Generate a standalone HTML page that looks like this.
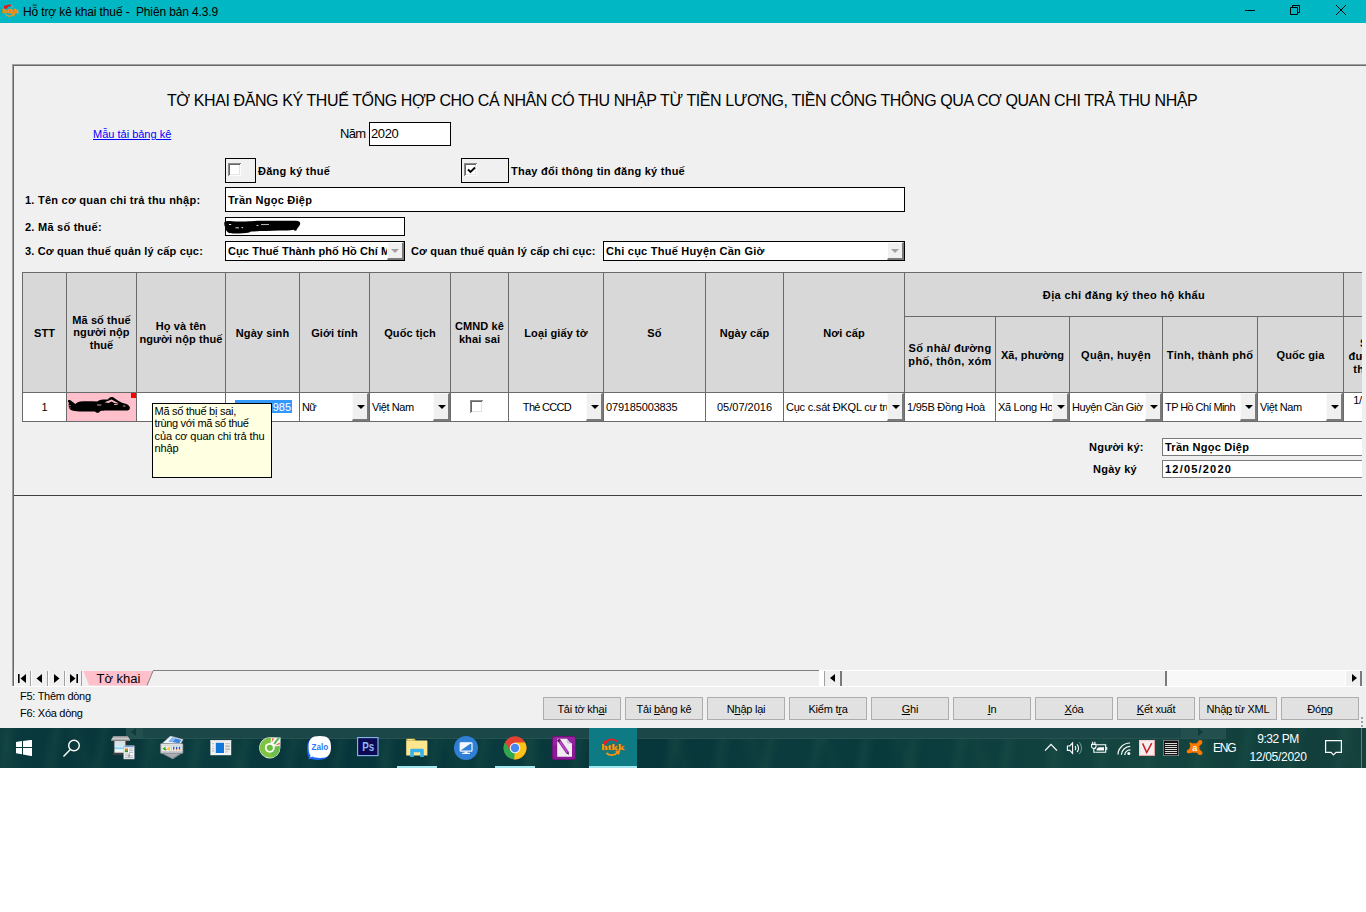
<!DOCTYPE html>
<html lang="vi">
<head>
<meta charset="utf-8">
<title>Hỗ trợ kê khai thuế</title>
<style>
*{box-sizing:border-box;margin:0;padding:0}
html,body{width:1366px;height:912px;overflow:hidden;background:#fff}
body{position:relative;font-family:"Liberation Sans",sans-serif;font-size:11px;color:#000}
.abs{position:absolute}
#win{position:absolute;left:0;top:0;width:1366px;height:728px;background:#f0f0f0;overflow:hidden}
#titlebar{position:absolute;left:0;top:0;width:1366px;height:23px;background:#00b7c3}
#title{position:absolute;left:23px;top:5px;font-size:12px;line-height:14px;white-space:pre;letter-spacing:-0.13px}
.b{font-weight:bold;letter-spacing:0.25px}
.lbl{position:absolute;white-space:nowrap;line-height:13px}
.inp{position:absolute;background:#fff;border:1px solid #000;white-space:nowrap;overflow:hidden;line-height:13px}
/* table */
#grid{position:absolute;left:22px;top:272px;width:1340px;height:150px;overflow:hidden}
.hc{position:absolute;padding-top:2px;background:#d8d8d8;border:1px solid #6a6a6a;display:flex;align-items:center;justify-content:center;text-align:center;font-weight:bold;letter-spacing:0.1px;line-height:12.5px;white-space:nowrap}
.dc{position:absolute;background:#fff;border:1px solid #6a6a6a;top:120px;height:30px;line-height:29px;white-space:nowrap;overflow:hidden;padding-left:2px}
.dc.c{text-align:center;padding-left:0}
.dd{position:absolute;top:0;right:0;width:17px;height:28px;background:#f0f0f0;border-left:1px solid #fafafa;border-top:1px solid #fafafa;border-right:2px solid #7a7a7a;border-bottom:2px solid #7a7a7a}
.dd:after{content:"";position:absolute;left:4px;top:11px;border-left:4px solid transparent;border-right:4px solid transparent;border-top:4px solid #000}
.cb{position:absolute;width:13px;height:13px;background:#fff;box-shadow:inset 1px 1px 0 #8a8a8a,inset -1px -1px 0 #fdfdfd,inset 2px 2px 0 #666,inset -2px -2px 0 #e3e3e3}
/* buttons */
.btn{position:absolute;top:697px;width:78px;height:23px;background:#e1e1e1;border:1px solid #adadad;text-align:center;font-size:11px;line-height:22px;white-space:nowrap;letter-spacing:-0.24px}
.btn u{text-decoration:underline}
/* taskbar */
#taskbar{position:absolute;left:0;top:728px;width:1366px;height:40px;overflow:hidden;background:
repeating-linear-gradient(100deg,rgba(40,95,80,0) 0,rgba(40,95,80,0.22) 9px,rgba(40,95,80,0) 19px,rgba(40,95,80,0) 47px),
repeating-linear-gradient(72deg,rgba(30,80,70,0) 0,rgba(30,80,70,0.2) 13px,rgba(30,80,70,0) 24px,rgba(30,80,70,0) 71px),
linear-gradient(90deg,#0a3a3d 0%,#07353a 8%,#0b3d3f 14%,#06343a 24%,#093a3d 36%,#07363a 48%,#0b3b3d 56%,#083a3c 64%,#0f403f 74%,#15453f 84%,#11403d 92%,#143f3c 100%)}
.tray{color:#fff;position:absolute;white-space:nowrap}
</style>
</head>
<body>
<div id="win">
  <div id="titlebar">
    <svg class="abs" style="left:0;top:0" width="20" height="23" viewBox="0 0 20 23">
      <path d="M11 5.6 C8.6 5 6.4 6 5.6 8" fill="none" stroke="#f01010" stroke-width="1.6"/>
      <path d="M4 5.4 L7.8 6.2 L7 8.6 L4.2 8.7 Z" fill="#f01010"/>
      <path d="M11.2 5.4 C12 6 12.4 6.8 12.6 7.6" fill="none" stroke="#9fd0d6" stroke-width="0.7"/>
      <path d="M6.4 15 C8.6 16.6 11 16.4 12.6 14.8" fill="none" stroke="#f79410" stroke-width="1.5"/>
      <path d="M11 13.2 L14.8 13 L14.6 16.8 Z" fill="#f79410"/>
      <path d="M5.2 14 C5.6 14.6 6 15 6.6 15.4" fill="none" stroke="#9fd0d6" stroke-width="0.7"/>
      <text x="2" y="12.7" font-family="Liberation Serif, serif" font-weight="bold" font-size="6.5" fill="#f99a14" stroke="#f58a0a" stroke-width="0.6" textLength="16" lengthAdjust="spacingAndGlyphs">htkk</text>
    </svg>
    <div id="title">Hỗ trợ kê khai thuế -  Phiên bản 4.3.9</div>
    <svg class="abs" style="left:1240px;top:0" width="126" height="23" viewBox="0 0 126 23" fill="none" stroke="#000" stroke-width="1">
      <path d="M5 10.5 H15"/>
      <path d="M50.5 7.5 h7 v7 h-7 z"/>
      <path d="M52.5 7.5 v-2 h7 v7 h-2"/>
      <path d="M96 5 L106 15 M106 5 L96 15"/>
    </svg>
  </div>

  <!-- main panel borders -->
  <div class="abs" style="left:12px;top:64px;width:1354px;height:1px;background:#a0a0a0"></div>
  <div class="abs" style="left:13px;top:65px;width:1353px;height:1px;background:#696969"></div>
  <div class="abs" style="left:12px;top:64px;width:1px;height:622px;background:#a0a0a0"></div>
  <div class="abs" style="left:13px;top:65px;width:1px;height:621px;background:#696969"></div>
  <div class="abs" style="left:14px;top:495px;width:1348px;height:1px;background:#404040"></div>
  <div class="abs" style="left:12px;top:686px;width:1354px;height:1px;background:#fff"></div>

  <!-- heading -->
  <div class="lbl" id="heading" style="left:167px;top:92px;font-size:16px;line-height:18px;letter-spacing:-0.4px">TỜ KHAI ĐĂNG KÝ THUẾ TỔNG HỢP CHO CÁ NHÂN CÓ THU NHẬP TỪ TIỀN LƯƠNG, TIỀN CÔNG THÔNG QUA CƠ QUAN CHI TRẢ THU NHẬP</div>

  <div class="lbl" id="link" style="left:93px;top:128px;color:#0000ff;text-decoration:underline">Mẫu tải bảng kê</div>
  <div class="lbl" id="nam" style="left:340px;top:126px;font-size:13px;line-height:15px;letter-spacing:-0.7px">Năm</div>
  <div class="inp" style="left:369px;top:122px;width:82px;height:24px;font-size:13px;line-height:21px;padding-left:1px;letter-spacing:-0.36px">2020</div>

  <!-- checkboxes -->
  <div class="abs" style="left:225px;top:158px;width:31px;height:25px;border:1px solid #000"></div>
  <div class="cb" style="left:228px;top:163px"></div>
  <div class="lbl b" id="l_dk" style="left:258px;top:165px">Đăng ký thuế</div>
  <div class="abs" style="left:461px;top:158px;width:48px;height:25px;border:1px solid #000"></div>
  <div class="cb" style="left:464px;top:163px"><svg class="abs" style="left:3px;top:2.5px" width="9" height="9" viewBox="0 0 9 9"><path d="M1 3.5 L3.5 6 L8 1.5" fill="none" stroke="#000" stroke-width="1.8"/></svg></div>
  <div class="lbl b" id="l_td" style="left:511px;top:165px">Thay đổi thông tin đăng ký thuế</div>

  <div class="lbl b" id="l1" style="left:25px;top:194px">1. Tên cơ quan chi trả thu nhập:</div>
  <div class="inp b" style="left:225px;top:187px;width:680px;height:25px;line-height:25px;padding-left:2px">Trần Ngọc Điệp</div>
  <div class="lbl b" id="l2" style="left:25px;top:221px">2. Mã số thuế:</div>
  <div class="inp" style="left:225px;top:217px;width:180px;height:19px"></div>
  <svg class="abs" style="left:224px;top:219px" width="78" height="16" viewBox="0 0 78 16"><path d="M0.4 3.2 C1.5 2 4 2 8 2.2 C14 2.6 20 2.4 28 2.2 C32 1.8 40 1.8 50 1.8 L72 1.8 C75.5 1.8 76.8 3.4 76 5.6 C75 8 73 9.4 72.4 11.6 L70.6 11.8 L69.8 10.8 C66 11.6 60 11.4 55 11.6 C45 12 36 12 27 12.6 C25.5 14 23 14.2 19 14.2 C13 14.4 8 14.6 5 14 C2.6 13 1.8 11 1.4 8.6 C0.6 7 0 5 0.4 3.2 Z" fill="#000"/><g fill="#fff"><rect x="5" y="5" width="2.2" height="0.9"/><rect x="11.5" y="8.4" width="3.4" height="0.9"/><rect x="17.5" y="8.2" width="1.6" height="0.9"/><rect x="32.5" y="6" width="2" height="0.8"/><rect x="37" y="5.2" width="8" height="0.7"/></g></svg>
  <div class="lbl b" id="l3" style="left:25px;top:245px;letter-spacing:0.16px">3. Cơ quan thuế quản lý cấp cục:</div>
  <div class="inp b" style="left:225px;top:241px;width:180px;height:20px;line-height:18px;padding-left:2px;letter-spacing:0.08px">Cục Thuế Thành phố Hồ Chí Minh
    <div class="abs" style="right:0;top:0;width:17px;height:18px;background:#f0f0f0;border-left:1px solid #fff;border-top:1px solid #fff;border-right:2px solid #7a7a7a;border-bottom:2px solid #7a7a7a"><div class="abs" style="left:3px;top:6px;border-left:4px solid transparent;border-right:4px solid transparent;border-top:4px solid #a0a0a0"></div></div>
  </div>
  <div class="lbl b" id="l4" style="left:411px;top:245px;letter-spacing:0.15px">Cơ quan thuế quản lý cấp chi cục:</div>
  <div class="inp b" style="left:603px;top:241px;width:302px;height:20px;line-height:18px;padding-left:2px">Chi cục Thuế Huyện Cần Giờ
    <div class="abs" style="right:0;top:0;width:17px;height:18px;background:#f0f0f0;border-left:1px solid #fff;border-top:1px solid #fff;border-right:2px solid #7a7a7a;border-bottom:2px solid #7a7a7a"><div class="abs" style="left:3px;top:6px;border-left:4px solid transparent;border-right:4px solid transparent;border-top:4px solid #a0a0a0"></div></div>
  </div>

  <!-- grid -->
  <div id="grid">
    <div class="hc" style="left:0;top:0;width:45px;height:121px">STT</div>
    <div class="hc" style="left:44px;top:0;width:71px;height:121px;padding-top:0;padding-bottom:0">Mã số thuế<br>người nộp<br>thuế</div>
    <div class="hc" style="left:114px;top:0;width:90px;height:121px;padding-top:0">Họ và tên<br>người nộp thuế</div>
    <div class="hc" style="left:203px;top:0;width:75px;height:121px">Ngày sinh</div>
    <div class="hc" style="left:277px;top:0;width:71px;height:121px">Giới tính</div>
    <div class="hc" style="left:347px;top:0;width:82px;height:121px">Quốc tịch</div>
    <div class="hc" style="left:428px;top:0;width:59px;height:121px;padding-top:0">CMND kê<br>khai sai</div>
    <div class="hc" style="left:486px;top:0;width:96px;height:121px">Loại giấy tờ</div>
    <div class="hc" style="left:581px;top:0;width:103px;height:121px">Số</div>
    <div class="hc" style="left:683px;top:0;width:79px;height:121px">Ngày cấp</div>
    <div class="hc" style="left:761px;top:0;width:122px;height:121px">Nơi cấp</div>
    <div class="hc" style="left:882px;top:0;width:440px;height:45px;letter-spacing:0.36px">Địa chỉ đăng ký theo hộ khẩu</div>
    <div class="hc" style="left:882px;top:44px;width:92px;height:77px;padding-top:0;letter-spacing:0.32px">Số nhà/ đường<br>phố, thôn, xóm</div>
    <div class="hc" style="left:973px;top:44px;width:75px;height:77px">Xã, phường</div>
    <div class="hc" style="left:1047px;top:44px;width:94px;height:77px;letter-spacing:0.3px">Quận, huyện</div>
    <div class="hc" style="left:1140px;top:44px;width:96px;height:77px;letter-spacing:0.26px">Tỉnh, thành phố</div>
    <div class="hc" style="left:1235px;top:44px;width:87px;height:77px">Quốc gia</div>
    <div class="hc" style="left:1321px;top:0;width:440px;height:45px"></div>
    <div class="hc" style="left:1321px;top:44px;width:76px;height:77px;line-height:13px;padding-top:3px;letter-spacing:0.3px">Số nhà/<br>đường phố,<br>thôn, xóm</div>

    <div class="dc c" style="left:0;width:45px">1</div>
    <div class="dc" style="left:44px;width:71px;background:#ffc0cb">
      <svg class="abs" style="left:0;top:0" width="66" height="24" viewBox="0 0 66 24"><path fill-rule="evenodd" d="M1 7.6 C2 6.8 3.4 7 4.4 8 L8.4 11 C10 9.6 11.6 9 13.4 8.6 C18 8.2 24 8.4 30 8.4 C32 7.4 34 6.6 36 6.5 L41 6.4 C42 5 43 4.2 44.4 4.1 C45.8 4 46.8 4.4 47.6 5.2 C50 7 52.4 8.6 55 9.8 C57 10.4 58.6 10.6 60 11.2 C61.6 12.2 62.6 13.4 62.9 14.6 C63 15.8 62.6 16.6 61.8 17 C60.4 17.8 59 17.4 58 17.6 L40 17.6 C37 17.6 35 17.8 33 18.2 C32.4 19.4 31.4 19.8 30.4 19.7 C29.2 19.6 28.6 19 28 18.4 L14 18.4 C10 18.6 6 18 3.4 16.8 C2 15.6 1.6 14 1.8 12.6 C1.4 11.6 1.6 10.6 2.2 10 C1.2 9.4 0.6 8.4 1 7.6 Z M37.5 9.2 L44.6 6.6 L52 10.6 L48 10.2 L44.6 8.6 L41.4 9.9 Z" fill="#000"/><g fill="#ffc0cb"><rect x="30" y="11.6" width="4.4" height="0.8"/><rect x="47" y="11.2" width="3.6" height="0.8"/><rect x="56" y="12.6" width="2.4" height="0.8"/><rect x="2.6" y="12" width="0.9" height="1"/><rect x="2.6" y="14.4" width="0.9" height="1"/></g></svg>
      <div class="abs" style="right:0;top:0;width:5px;height:5px;background:#ff0000"></div>
    </div>
    <div class="dc" style="left:114px;width:90px"></div>
    <div class="dc" style="left:203px;width:75px;padding-left:0"><span class="abs" style="left:9px;top:7px;height:13px;line-height:15px;background:#3399ff;color:#fff;padding:0 1px">20/10/1985</span></div>
    <div class="dc" style="left:277px;width:71px;letter-spacing:-0.6px">Nữ<div class="dd"></div></div>
    <div class="dc" style="left:347px;width:82px;letter-spacing:-0.41px">Việt Nam<div class="dd"></div></div>
    <div class="dc" style="left:428px;width:59px"><div class="cb" style="left:19px;top:7px"></div></div>
    <div class="dc c" style="left:486px;width:96px;padding-right:18px;letter-spacing:-0.69px">Thẻ CCCD<div class="dd"></div></div>
    <div class="dc" style="left:581px;width:103px;letter-spacing:-0.16px">079185003835</div>
    <div class="dc c" style="left:683px;width:79px">05/07/2016</div>
    <div class="dc" style="left:761px;width:122px;letter-spacing:-0.22px">Cục c.sát ĐKQL cư trú<div class="dd"></div></div>
    <div class="dc" style="left:882px;width:92px;letter-spacing:-0.24px">1/95B Đồng Hoà</div>
    <div class="dc" style="left:973px;width:75px;letter-spacing:-0.3px">Xã Long Hoà<div class="dd"></div></div>
    <div class="dc" style="left:1047px;width:94px;letter-spacing:-0.43px">Huyện Cần Giờ<div class="dd"></div></div>
    <div class="dc" style="left:1140px;width:96px;letter-spacing:-0.58px">TP Hồ Chí Minh<div class="dd"></div></div>
    <div class="dc" style="left:1235px;width:87px;letter-spacing:-0.41px">Việt Nam<div class="dd"></div></div>
    <div class="dc" style="left:1321px;width:76px;line-height:13px;text-align:center;padding:1px 0 0 0;white-space:normal;letter-spacing:-0.24px">1/95B Đồng Hoà</div>
  </div>

  <!-- tooltip -->
  <div class="abs" id="tip" style="left:152px;top:403px;width:120px;height:75px;background:#ffffe1;border:1px solid #000;padding:1px 0 0 1.5px;font-size:11px;line-height:12.35px;letter-spacing:-0.1px;white-space:nowrap"><span style="letter-spacing:-0.26px">Mã số thuế bị sai,</span><br><span style="letter-spacing:-0.34px">trùng với mã số thuế</span><br>của cơ quan chi trả thu<br>nhập</div>

  <!-- signer -->
  <div class="lbl b" id="l_nk" style="left:1089px;top:441px">Người ký:</div>
  <div class="inp b" style="left:1162px;top:438px;width:210px;height:18px;line-height:16px;padding-left:2px;border-color:#7a7a7a">Trần Ngọc Diệp</div>
  <div class="lbl b" id="l_ngk" style="left:1093px;top:463px">Ngày ký</div>
  <div class="inp b" style="left:1162px;top:460px;width:210px;height:18px;line-height:16px;padding-left:2px;border-color:#7a7a7a;letter-spacing:1.2px">12/05/2020</div>
  <div class="abs" style="left:1362px;top:66px;width:4px;height:429px;background:#f0f0f0"></div>

  <!-- sheet tab bar -->
  <div class="abs" style="left:153px;top:670px;width:666px;height:1px;background:#808080"></div>
  <svg class="abs" style="left:14px;top:671px" width="142" height="15" viewBox="0 0 142 15">
    <rect x="0" y="0" width="68" height="15" fill="#f0f0f0"/>
    <g fill="#fff"><rect x="0" y="0" width="1" height="15"/><rect x="17" y="0" width="1" height="15"/><rect x="34" y="0" width="1" height="15"/><rect x="51" y="0" width="1" height="15"/></g>
    <g fill="#a0a0a0"><rect x="16" y="0" width="1" height="15"/><rect x="33" y="0" width="1" height="15"/><rect x="50" y="0" width="1" height="15"/><rect x="67" y="0" width="1" height="15"/></g>
    <g fill="#000">
      <rect x="4" y="3" width="1.6" height="9"/><path d="M12 3 V12 L6.5 7.5 Z"/>
      <path d="M28 3 V12 L22.5 7.5 Z"/>
      <path d="M40 3 V12 L45.5 7.5 Z"/>
      <path d="M56 3 V12 L61.5 7.5 Z"/><rect x="62.4" y="3" width="1.6" height="9"/>
    </g>
    <path d="M69.5 0 L139 0 L133 14.5 L75 14.5 Z" fill="#ffc0cb"/>
    <path d="M139 0 L133 14.5" stroke="#808080" stroke-width="1" fill="none"/>
    <text x="82.5" y="12" font-family="Liberation Sans, sans-serif" font-size="13" fill="#000">Tờ khai</text>
  </svg>
  <!-- splitter + scrollbar -->
  <div class="abs" style="left:819px;top:670px;width:5px;height:16px;background:#fff"></div>
  <div class="abs" style="left:824px;top:670px;width:538px;height:1px;background:#fff"></div>
  <div class="abs" style="left:824px;top:671px;width:18px;height:15px;background:#f0f0f0;border-left:1px solid #a0a0a0;border-right:2px solid #7a7a7a"><div class="abs" style="left:5px;top:3px;border-top:4.5px solid transparent;border-bottom:4.5px solid transparent;border-right:5px solid #000"></div></div>
  <div class="abs" style="left:842px;top:671px;width:325px;height:15px;background:#f0f0f0;border-right:2px solid #7a7a7a"></div>
  <div class="abs" style="left:1167px;top:671px;width:178px;height:15px;background:#f8f8f8"></div>
  <div class="abs" style="left:1345px;top:671px;width:17px;height:15px;background:#f0f0f0;border-left:1px solid #fff;border-right:2px solid #7a7a7a"><div class="abs" style="left:6px;top:3px;border-top:4.5px solid transparent;border-bottom:4.5px solid transparent;border-left:5px solid #000"></div></div>

  <div class="lbl" id="f5" style="left:20px;top:689px;font-size:11px;line-height:14px;letter-spacing:-0.28px">F5: Thêm dòng</div>
  <div class="lbl" id="f6" style="left:20px;top:706px;font-size:11px;line-height:14px;letter-spacing:-0.28px">F6: Xóa dòng</div>

  <div class="btn" style="left:543px">Tải tờ kh<u>a</u>i</div>
  <div class="btn" style="left:625px">Tải <u>b</u>ảng kê</div>
  <div class="btn" style="left:707px">N<u>h</u>ập lại</div>
  <div class="btn" style="left:789px">Kiểm t<u>r</u>a</div>
  <div class="btn" style="left:871px"><u>G</u>hi</div>
  <div class="btn" style="left:953px"><u>I</u>n</div>
  <div class="btn" style="left:1035px"><u>X</u>óa</div>
  <div class="btn" style="left:1117px"><u>K</u>ết xuất</div>
  <div class="btn" style="left:1199px">Nhậ<u>p</u> từ XML</div>
  <div class="btn" style="left:1281px">Đó<u>n</u>g</div>
  <svg class="abs" style="left:1360px;top:716px" width="4" height="12" viewBox="0 0 4 12" fill="#a0a0a0"><rect x="1" y="1" width="2" height="2"/><rect x="1" y="5" width="2" height="2"/><rect x="1" y="9" width="2" height="2"/></svg>
</div>

<div id="taskbar">
  <!-- ghost band -->
  <div class="abs" style="left:126px;top:0;width:1100px;height:11px;background:#1c4749;border-bottom:1px solid #275251"></div>
  <div class="abs" style="left:126px;top:0;width:17px;height:10px;background:#23504f"></div>
  <div class="abs" style="left:1181px;top:0;width:45px;height:10px;background:#23504f"></div>
  <div class="abs" style="left:131px;top:0;border-top:4px solid transparent;border-bottom:4px solid transparent;border-right:5px solid #0e3b3e"></div>
  <div class="abs" style="left:1198px;top:0;border-top:4px solid transparent;border-bottom:4px solid transparent;border-left:5px solid #0e3b3e"></div>
  <!-- active app -->
  <div class="abs" style="left:589px;top:0;width:48px;height:40px;background:#0e7b84"></div>
  <div class="abs" style="left:589px;top:38px;width:48px;height:2px;background:#a4e6ee"></div>
  <div class="abs" style="left:397px;top:38px;width:40px;height:2px;background:#a4e6ee"></div>
  <div class="abs" style="left:495px;top:38px;width:40px;height:2px;background:#a4e6ee"></div>

  <!-- start -->
  <svg class="abs" style="left:16px;top:12px" width="16" height="16" viewBox="0 0 16 16" fill="#fff"><path d="M0 1.9 L6 1 V7 H0 Z M7 0.9 L16 -0.2 V7 H7 Z M0 8 H6 V14.2 L0 13.3 Z M7 8 H16 V16.2 L7 14.4 Z"/></svg>
  <!-- search -->
  <svg class="abs" style="left:62px;top:10px" width="20" height="20" viewBox="0 0 20 20" fill="none" stroke="#fff" stroke-width="1.4"><circle cx="12" cy="7.5" r="5.3"/><path d="M8.3 11.5 L1.5 18.5"/></svg>
  <!-- fax & scan -->
  <svg class="abs" style="left:111px;top:8px" width="24" height="24" viewBox="0 0 24 24">
    <defs><linearGradient id="gLid" x1="0" y1="0" x2="0" y2="1"><stop offset="0" stop-color="#8a8a8a"/><stop offset="0.55" stop-color="#cfcfcf"/><stop offset="1" stop-color="#6f6f6f"/></linearGradient><linearGradient id="gGlass" x1="0" y1="0" x2="0" y2="1"><stop offset="0" stop-color="#d9dcde"/><stop offset="0.45" stop-color="#d2ecf5"/><stop offset="0.62" stop-color="#86d2ec"/><stop offset="0.72" stop-color="#f6fcfe"/><stop offset="1" stop-color="#dfe8ec"/></linearGradient></defs>
    <rect x="1.8" y="4.6" width="14.4" height="13.4" fill="#2b2e31"/><rect x="3.4" y="5" width="11" height="12.2" fill="url(#gGlass)"/>
    <path d="M2.4 0 H16.6 L19.2 4 C19.3 4.7 18.8 5 18 5 H1 C0.3 5 -0.1 4.7 0 4 Z" fill="url(#gLid)"/>
    <rect x="1.4" y="16.8" width="15.2" height="2.2" rx="1.1" fill="#3b3e41"/>
    <rect x="12.8" y="9.8" width="10.4" height="13.2" fill="#f5f7f9" stroke="#b4bcc6" stroke-width="0.5"/><rect x="13.2" y="10.2" width="9.6" height="1" fill="#5b8fd0"/>
    <rect x="13.8" y="12.4" width="3.2" height="2" fill="#e58a1a"/><rect x="13.8" y="14.2" width="3.2" height="2" fill="#3f8f2f"/>
    <g fill="#a9afb6"><rect x="18" y="12.6" width="4.2" height="0.8"/><rect x="18" y="14.4" width="4.2" height="0.8"/><rect x="18" y="16.2" width="4.2" height="0.8"/><rect x="13.8" y="17.6" width="3.4" height="0.8"/><rect x="13.8" y="19.4" width="8.4" height="0.8"/><rect x="13.8" y="21.2" width="8.4" height="0.8"/></g><rect x="17.6" y="17.4" width="0.9" height="4" fill="#6f7680"/>
  </svg>
  <!-- scanner 2 -->
  <svg class="abs" style="left:160px;top:8px" width="24" height="24" viewBox="0 0 24 24">
    <path d="M10.5 0 L23.2 3.6 L20 8.6 L2 7.6 Z" fill="#eef3fb" stroke="#9aa6b6" stroke-width="0.5"/><path d="M12.4 1.4 L21.4 4 L19.2 7.2 L8.6 5.4 Z" fill="#3f86e0"/><path d="M12.4 1.4 L16 2.4 L12.6 6 L8.6 5.4 Z" fill="#8db9ee"/>
    <path d="M1.2 17.2 L12.8 23.2 L22.2 17.2 Z" fill="#8d9094"/><path d="M4.4 17.6 L12.6 21.8 L19 17.6 Z" fill="#c9cbce"/><g stroke="#8d9094" stroke-width="0.5"><path d="M7 17.6 L13.6 21.2"/><path d="M10 17.6 L15.2 20.2"/><path d="M13 17.6 L16.8 19.2"/><path d="M5.6 19 H17.6"/><path d="M8.4 20.4 H15.4"/></g>
    <rect x="0.4" y="7.6" width="22.6" height="9.8" rx="1" fill="#c2c4c7" stroke="#7b7f84" stroke-width="0.6"/><rect x="1" y="8.2" width="21.4" height="1.4" fill="#e6e7e9"/>
    <rect x="1.8" y="10.2" width="9" height="5" fill="#f4f4ea"/><rect x="11.8" y="10.2" width="9.8" height="5" fill="#eef0f4"/>
    <path d="M2.4 12.7 L5.6 10.4 V15 Z" fill="#2fae2f"/><path d="M6.6 12.7 L9.9 10.4 V15 Z" fill="#e8c81e"/><rect x="5.6" y="13" width="1" height="1" fill="#d03030"/>
    <g><rect x="13" y="10.8" width="1.4" height="2.2" fill="#2a55c8"/><rect x="13" y="13" width="1.4" height="1.4" fill="#e08a2a"/><rect x="15.9" y="10.8" width="1.4" height="2.2" fill="#2a55c8"/><rect x="15.9" y="13" width="1.4" height="1.4" fill="#e08a2a"/><rect x="18.8" y="10.8" width="1.4" height="2.2" fill="#2a55c8"/><rect x="18.8" y="13" width="1.4" height="1.4" fill="#e08a2a"/></g>
  </svg>
  <!-- window icon -->
  <svg class="abs" style="left:210px;top:12px" width="22" height="16" viewBox="0 0 22 16"><rect x="0.4" y="0" width="20.8" height="15.2" fill="#f3f3f3"/><rect x="0.4" y="0" width="20.8" height="1.2" fill="#dcdcdc"/><rect x="5.8" y="2.8" width="8.2" height="10.2" fill="#0f78d8"/><g fill="#b9b9b9"><rect x="2" y="3.2" width="2.2" height="1"/><rect x="2" y="5.6" width="2.2" height="1.6" fill="#e2e2e2"/><rect x="2" y="8.2" width="2.2" height="1"/><rect x="2" y="10.4" width="2.2" height="1.2"/><rect x="15.2" y="3.2" width="4.6" height="1"/><rect x="15.2" y="5.4" width="4.8" height="1.8"/><rect x="15.2" y="8.4" width="4.8" height="1.8"/><rect x="15.2" y="11.4" width="2.8" height="1"/></g></svg>
  <!-- coc coc -->
  <svg class="abs" style="left:259px;top:9px" width="23" height="23" viewBox="0 0 23 23"><path d="M10.8 0.2 A10.6 10.6 0 1 0 21.4 10.8 L21.6 0.6 Z" fill="#f4f8f0"/><path d="M20.58 8.72 A10 10 0 1 1 12.19 0.9 L10.8 10.8 Z" fill="#7dc444"/><path d="M20.58 8.72 A10 10 0 0 1 14 20.2 L10.8 10.8 Z" fill="#5cb85a" opacity="0.55"/><circle cx="10.8" cy="10.8" r="4.9" fill="#fbfdf8"/><circle cx="10.8" cy="10.8" r="3.1" fill="#6cbc3c"/><path d="M12.6 5.4 L13.4 1 L15 1.4 Z" fill="#f0553a"/><path d="M14.4 6.4 L18.6 0.8 L21 1 L16 7.6 Z" fill="#5cb85a"/><path d="M16.4 8.6 L20.4 5.6 L21 7.2 Z" fill="#f0553a"/></svg>
  <!-- zalo -->
  <svg class="abs" style="left:306px;top:8px" width="26" height="25" viewBox="0 0 26 25"><path d="M1.2 12 C1.2 5 4 2.6 9 2.4 L20 10 L21.6 21 C19 23.4 15 23.9 11.4 23.9 C8.6 23.9 6.4 23.6 4.8 22.8 L2.4 23.6 L3 21.4 C1.6 19.4 1.2 16.4 1.2 12 Z" fill="#1e6bff"/><path d="M13.8 0.1 C22 0.1 25 3 25 11 C25 19 22 22 13.8 22 C10.6 22 8.2 21.6 6.4 20.6 L4 21.4 L4.6 19.4 C3 17.6 2.6 15 2.6 11 C2.6 3 5.6 0.1 13.8 0.1 Z" fill="#fff"/><text x="13.9" y="14.2" font-family="Liberation Sans, sans-serif" font-weight="bold" font-size="8.6" fill="#2a78ff" text-anchor="middle" textLength="16.6" lengthAdjust="spacingAndGlyphs">Zalo</text></svg>
  <!-- photoshop -->
  <svg class="abs" style="left:357px;top:9px" width="22" height="20" viewBox="0 0 22 20"><rect x="0.6" y="0.6" width="20.4" height="18" fill="#0c0a52" stroke="#8cb8f6" stroke-width="1.1"/><text x="5.2" y="14.1" font-family="Liberation Sans, sans-serif" font-weight="bold" font-size="12.6" fill="#8cb8f6" textLength="12" lengthAdjust="spacingAndGlyphs">Ps</text></svg>
  <!-- explorer -->
  <svg class="abs" style="left:406px;top:10px" width="22" height="20" viewBox="0 0 22 20"><path d="M0.2 2 C0.2 1.2 0.6 0.8 1.4 0.8 H8.6 L10 2.4 H0.2 Z" fill="#f2c230"/><rect x="1.8" y="1.4" width="5" height="0.9" fill="#fdf3cf"/><path d="M0.2 2.4 H20.4 C21 2.4 21.4 2.8 21.4 3.4 V17.6 H0.2 Z" fill="#ffe68c"/><path d="M4.2 19 V12 C4.2 11.2 4.8 10.8 5.6 10.8 H16.4 C17.2 10.8 17.8 11.2 17.8 12 V19 H14.2 V14.2 H7.8 V19 Z" fill="#38b2ee"/></svg>
  <!-- monitor circle -->
  <svg class="abs" style="left:454px;top:8px" width="24" height="24" viewBox="0 0 24 24"><circle cx="12" cy="12" r="12" fill="#2f7fd6"/><path d="M6.2 6.8 H17.8 L6.2 14.8 Z" fill="#f4f8fd"/><rect x="6.2" y="6.8" width="11.8" height="8.4" rx="0.8" fill="none" stroke="#f4f8fd" stroke-width="1.2"/><path d="M10.8 15.6 H13.2 L13.6 17 H10.4 Z" fill="#f4f8fd"/><rect x="8" y="16.8" width="8" height="1.2" rx="0.5" fill="#f4f8fd"/></svg>
  <!-- chrome -->
  <svg class="abs" style="left:503px;top:8px" width="24" height="24" viewBox="0 0 24 24"><circle cx="12" cy="12" r="11.4" fill="#e34133"/><path d="M12 12 L2.1 6.3 A11.4 11.4 0 0 0 11.2 23.4 L17 13 Z" fill="#2da94f"/><path d="M12 12 L11.2 23.4 A11.4 11.4 0 0 0 21.9 6.3 H12 Z" fill="#fbc116"/><path d="M12 6.3 H21.9 A11.4 11.4 0 0 0 2.1 6.3 L7 14.8 Z" fill="#e34133"/><circle cx="12" cy="12" r="5.3" fill="#f3f3f3"/><circle cx="12" cy="12" r="4.2" fill="#4687f4"/></svg>
  <!-- infopath -->
  <svg class="abs" style="left:552px;top:8px" width="24" height="24" viewBox="0 0 24 24"><rect x="0" y="0" width="24" height="24" rx="2.6" fill="#6f1178"/><rect x="1" y="1" width="22" height="22" rx="2" fill="#8a1a94"/><path d="M1 1 H23 V10 C16 6 8 6 1 10 Z" fill="#9a2aa6" opacity="0.6"/><path d="M5.2 2.8 H15 C16 4.6 18 6.6 20 7.6 V20.8 H5.2 Z" fill="#f1ecf2"/><path d="M15 2.8 C15.6 5.4 17.4 7 20 7.6 C18 7.8 16.4 7.6 15.2 7 C14.8 5.8 14.8 4.4 15 2.8 Z" fill="#cdbad2"/><path d="M6.6 6.6 L9.2 4.8 L16.6 15.4 L14 17.2 Z" fill="#a030b0"/><path d="M6.6 6.6 L9.2 4.8 L8 3.2 C7.6 2.8 7 2.8 6.4 3.2 L5.6 3.8 C5 4.2 5 4.8 5.4 5.2 Z" fill="#5c0e66"/><path d="M14 17.2 L16.6 15.4 L17 18.8 Z" fill="#4a0a54"/><path d="M7.9 5.7 L15.3 16.3" stroke="#c86ad4" stroke-width="0.7"/></svg>
  <!-- htkk -->
  <svg class="abs" style="left:600px;top:9px" width="26" height="22" viewBox="0 0 26 22"><path d="M17.2 4.6 A7.6 7.6 0 0 0 5.6 5.4" fill="none" stroke="#ee1c1c" stroke-width="1.8"/><path d="M2.8 3.4 L8.4 4.4 L4.6 8.4 Z" fill="#ee1c1c"/><path d="M6.4 16 A7.6 7.6 0 0 0 17.6 15.4" fill="none" stroke="#f59212" stroke-width="1.8"/><path d="M20.4 12.8 L15 14 L19 18 Z" fill="#f59212"/><text x="1.2" y="13" font-family="Liberation Serif, serif" font-weight="bold" font-size="8" fill="#f9a410" stroke="#a85200" stroke-width="0.5" paint-order="stroke" textLength="23.2" lengthAdjust="spacingAndGlyphs">htkk</text></svg>

  <!-- tray -->
  <svg class="abs" style="left:1044px;top:15px" width="14" height="9" viewBox="0 0 14 9" fill="none" stroke="#fff" stroke-width="1.3"><path d="M1 7.6 L7 1.4 L13 7.6"/></svg>
  <svg class="abs" style="left:1066px;top:13px" width="18" height="14" viewBox="0 0 18 14" fill="none" stroke="#fff" stroke-width="1.1"><path d="M1.4 5 H3.8 L6.6 2 V12.4 L3.8 9.4 H1.4 Z"/><path d="M9 5.2 C10 6.2 10 8.2 9 9.2"/><path d="M11 3.4 C13 5.4 13 9 11 11"/><path d="M13.2 1.4 C16.2 4.4 16.2 10 13.2 13" stroke="#8fa9a8" stroke-width="0.9"/></svg>
  <svg class="abs" style="left:1091px;top:13px" width="17" height="13" viewBox="0 0 17 13" fill="none" stroke="#fff" stroke-width="1.1"><path d="M1.7 0.8 V3.4 M3.9 0.8 V3.4"/><path d="M0.6 3.4 H5 V5.4 C5 6.8 4 7.4 2.8 7.4 C1.6 7.4 0.6 6.8 0.6 5.4 Z"/><path d="M2.8 7.4 V11.2 H4.6"/><path d="M5.4 3.8 H14.7 V11.2 H4.6"/><rect x="15.2" y="6" width="1.1" height="3" fill="#fff" stroke="none"/><path d="M7.6 6.2 H13 V9.6 H5.6 V8 Z" fill="#fff" stroke="none"/></svg>
  <svg class="abs" style="left:1117px;top:14px" width="15" height="14" viewBox="0 0 15 14" fill="none" stroke="#fff" stroke-width="1.2"><path d="M1 12.6 C1 6.4 6.4 1 13 1"/><path d="M4.4 12.8 C4.4 8.4 8.4 4.4 13.2 4.4"/><path d="M7.8 13 C7.8 10.2 10.2 7.8 13.4 7.8"/><circle cx="11.8" cy="11.6" r="1.5" fill="#fff" stroke="none"/></svg>
  <svg class="abs" style="left:1139px;top:12px" width="16" height="16" viewBox="0 0 16 16"><rect x="0" y="0" width="16" height="16" fill="#f3d4d4"/><rect x="1.2" y="1.2" width="13.6" height="13.6" fill="#f7eeee"/><rect x="15" y="0" width="1" height="16" fill="#e9a3a3"/><rect x="0" y="15" width="16" height="1" fill="#e9a3a3"/><path d="M3.6 3.4 L7.7 12.6 L12.8 3.2" fill="none" stroke="#c8202a" stroke-width="1.5"/></svg>
  <svg class="abs" style="left:1163px;top:12px" width="16" height="16" viewBox="0 0 16 16"><rect x="0" y="0" width="16" height="16" fill="#8c8c8c"/><rect x="0.8" y="0.8" width="14.4" height="14.4" fill="#141414"/><g stroke="#d8d8d8" stroke-width="1"><path d="M2 3.5 H14"/><path d="M2 5.5 H14"/><path d="M2 7.5 H14"/><path d="M2 9.5 H14"/><path d="M2 11.5 H14"/><path d="M2 13.5 H14"/></g></svg>
  <svg class="abs" style="left:1186px;top:12px" width="17" height="16" viewBox="0 0 17 16"><path d="M4 2.2 C5 2.6 6 3.2 7 3.6 C8.4 3.2 9.6 3.2 10.6 3.6 L12.2 1.2 C13 -0.2 15 -0.2 16 1 C16.8 2.2 16.4 3.4 15.4 4.2 L13.2 6 C13.6 7.2 13.6 8.2 13.4 9.2 L15.8 11.4 C16.8 12.6 16.6 14.2 15.4 14.8 C14.2 15.4 13 15 12.2 14.2 L10.6 12.4 C9.4 12.8 8.2 12.8 7 12.4 L3.6 13.2 C2.4 13.4 1.2 13.2 0.8 12.2 C0.4 11.2 1 10.4 1.8 9.8 L3.6 8.4 C3.8 7.4 4 6.6 4.4 6 C4 5 3.6 3.6 3.6 2.8 C3.6 2.4 3.8 2.2 4 2.2 Z" fill="#ff7800"/><text x="8.7" y="10.6" font-family="Liberation Sans, sans-serif" font-weight="bold" font-size="9" fill="#fff" text-anchor="middle">a</text></svg>
  <div class="tray" id="eng" style="left:1213px;top:13px;font-size:12px;line-height:14px;letter-spacing:-1.2px">ENG</div>
  <div class="tray" id="clk" style="left:1238px;top:4px;width:80px;text-align:center;font-size:12px;line-height:14px;letter-spacing:-0.43px">9:32 PM</div>
  <div class="tray" id="dat" style="left:1238px;top:22px;width:80px;text-align:center;font-size:12px;line-height:14px;letter-spacing:-0.3px">12/05/2020</div>
  <svg class="abs" style="left:1325px;top:12px" width="17" height="16" viewBox="0 0 17 16" fill="none" stroke="#fff" stroke-width="1.2"><path d="M0.6 0.6 H16.4 V12.4 H11 L8.5 15 L6 12.4 H0.6 Z"/></svg>
  <div class="abs" style="left:1361px;top:0;width:1px;height:40px;background:#5d7f7c"></div>
</div>
</body>
</html>
